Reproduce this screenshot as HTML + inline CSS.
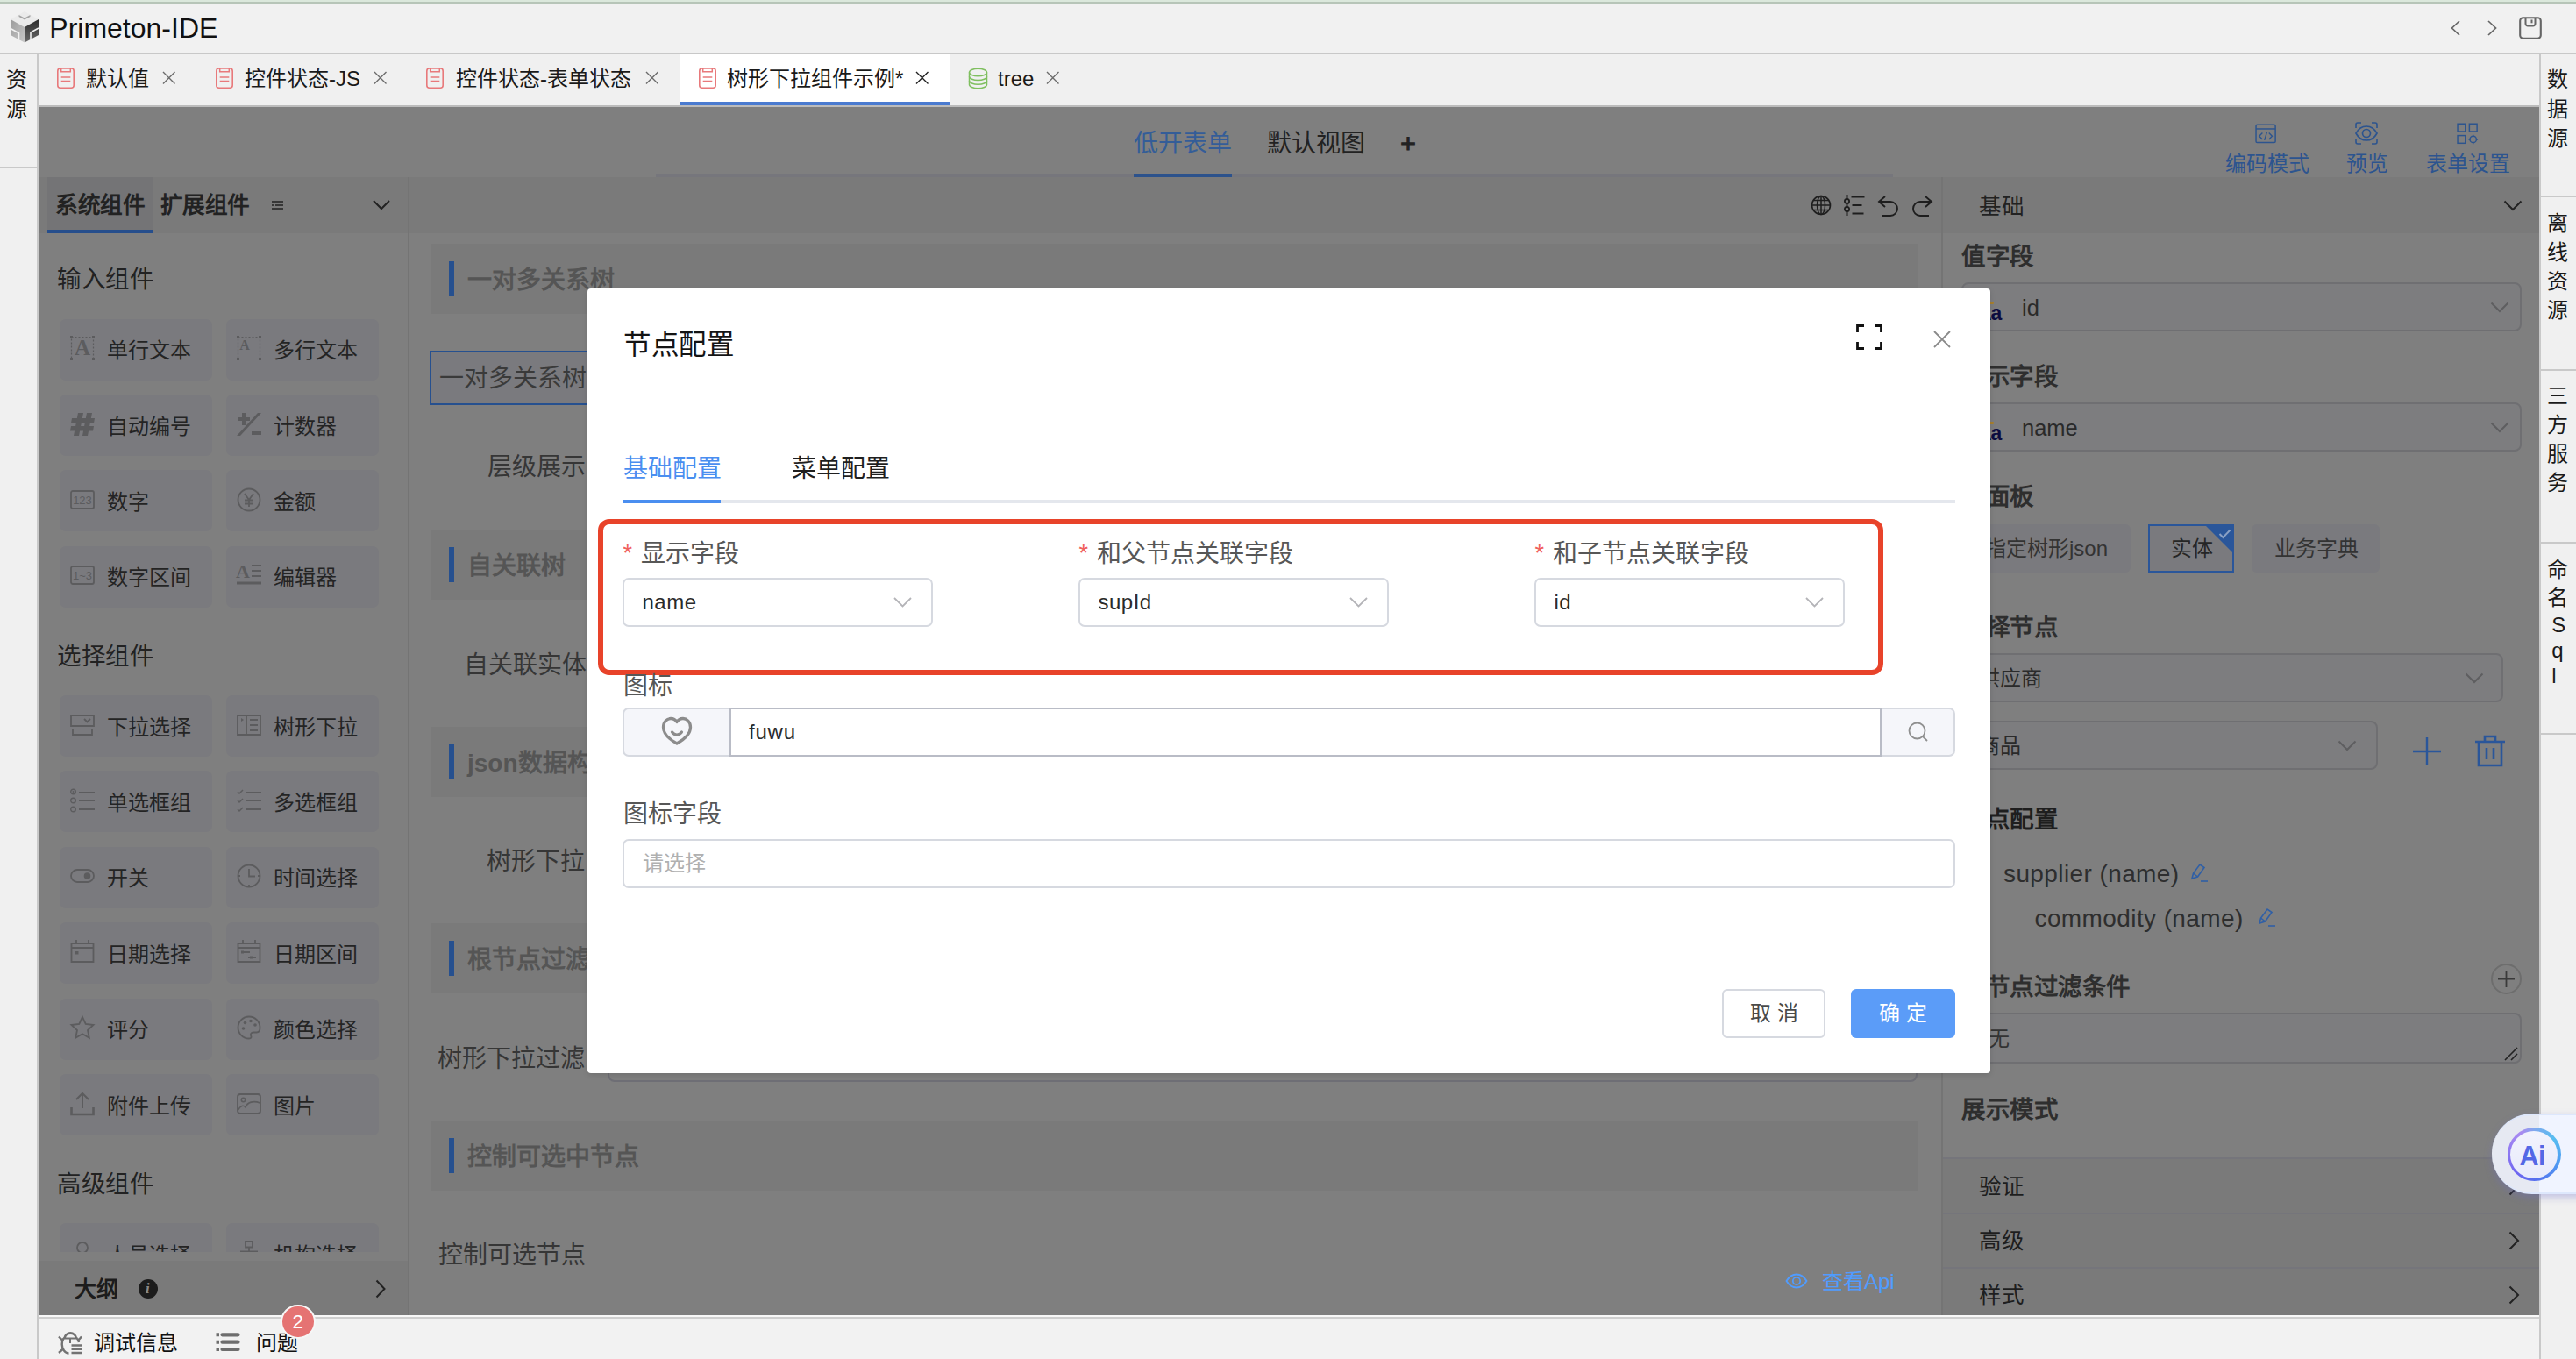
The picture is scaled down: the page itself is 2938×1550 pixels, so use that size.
<!DOCTYPE html>
<html lang="zh-CN"><head><meta charset="utf-8"><title>Primeton-IDE</title>
<style>
html,body{margin:0;padding:0}
body{width:2938px;height:1550px;position:relative;overflow:hidden;background:#f0f0f0;font-family:"Liberation Sans",sans-serif;color:#1f1f1f}
body div,body svg{position:absolute;box-sizing:border-box}
.t{white-space:nowrap}
svg{overflow:visible}
.t i{display:inline-block;width:1em;text-align:center;font-style:normal}

</style></head>
<body>
<div style="left:0px;top:0px;width:2938px;height:4px;background:linear-gradient(#dbe8dc 0,#dbe8dc 55%,#b7c5b8 56%,#b7c5b8 100%)"></div>
<div style="left:0px;top:4px;width:2938px;height:58px;background:#f1f1f1;border-bottom:2px solid #c8c8c8"></div>
<svg style="left:10px;top:12px;" width="36" height="38" viewBox="0 0 36 38"><defs><linearGradient id="lg1" x1="0" y1="0" x2="1" y2="1"><stop offset="0" stop-color="#9a9a9a"/><stop offset="1" stop-color="#c9c9c9"/></linearGradient><linearGradient id="lg2" x1="0" y1="0" x2="0" y2="1"><stop offset="0" stop-color="#2c2c2c"/><stop offset="1" stop-color="#6a6a6a"/></linearGradient></defs><path d="M18 1L34 10L18 19L2 10Z" fill="#ebebeb"/><path d="M2 10L18 19V36.500L2 28Z" fill="url(#lg1)"/><path d="M18 19L34 10V28L18 36.500Z" fill="url(#lg2)"/><path d="M11.500 5L18 8.500L24.500 5V7L18 10.500L11.500 7Z" fill="#a5a5a5"/><path d="M2 20.500L11.500 25.800V33" fill="none" stroke="#f1f1f1" stroke-width="1.600"/><path d="M34 20L25 25V32.500" fill="none" stroke="#f1f1f1" stroke-width="1.600"/></svg>
<div class="t" style="left:56.3px;top:9.5px;height:45px;line-height:45px;font-size:32px;color:#111;">Primeton-IDE</div>
<svg style="left:2795px;top:23px;" width="11" height="18" viewBox="0 0 11 18"><path d="M10 1L1.500 9L10 17" fill="none" stroke="#666" stroke-width="1.700"/></svg>
<svg style="left:2837px;top:23px;" width="11" height="18" viewBox="0 0 11 18"><path d="M1 1L9.500 9L1 17" fill="none" stroke="#666" stroke-width="1.700"/></svg>
<svg style="left:2873px;top:19px;" width="26" height="26" viewBox="0 0 26 26"><rect x="1.200" y="1.200" width="23.600" height="23.600" rx="3.500" fill="none" stroke="#666" stroke-width="2.100"/><path d="M7.500 1.500v6.500a2.500 2.500 0 0 0 2.500 2.500h6a2.500 2.500 0 0 0 2.500-2.500V1.500" fill="none" stroke="#666" stroke-width="2"/><path d="M14.500 3.500v3.800" stroke="#666" stroke-width="2"/></svg>
<div style="left:44px;top:62px;width:2852px;height:60px;background:#f0f0f0;border-bottom:2px solid #bcbcbc"></div>
<div style="left:775px;top:62px;width:308px;height:58px;background:#fff;border-bottom:4px solid #4a7bd0"></div>
<svg style="left:63.8px;top:76px;" width="22" height="26" viewBox="0 0 22 26"><rect x="1.800" y="1.900" width="18.400" height="22.300" rx="3" fill="none" stroke="#e8797b" stroke-width="1.600"/><path d="M5.700 2V5.800H16.300V2M5.700 11.900H16.300M5.700 16.400H16.300" fill="none" stroke="#e8797b" stroke-width="1.500"/></svg>
<div class="t" style="left:98px;top:72.5px;height:34px;line-height:34px;font-size:24px;color:#1a1a1a;"><i>默</i><i>认</i><i>值</i></div>
<svg style="left:184.5px;top:81.05px;" width="15.5" height="15.5" viewBox="0 0 15.5 15.5"><path d="M1 1L14.5 14.5M14.5 1L1 14.5" stroke="#6b6b6b" stroke-width="1.4" fill="none"/></svg>
<svg style="left:244.8px;top:76px;" width="22" height="26" viewBox="0 0 22 26"><rect x="1.800" y="1.900" width="18.400" height="22.300" rx="3" fill="none" stroke="#e8797b" stroke-width="1.600"/><path d="M5.700 2V5.800H16.300V2M5.700 11.900H16.300M5.700 16.400H16.300" fill="none" stroke="#e8797b" stroke-width="1.500"/></svg>
<div class="t" style="left:279px;top:72.5px;height:34px;line-height:34px;font-size:24px;color:#1a1a1a;"><i>控</i><i>件</i><i>状</i><i>态</i>-JS</div>
<svg style="left:425.5px;top:81.05px;" width="15.5" height="15.5" viewBox="0 0 15.5 15.5"><path d="M1 1L14.5 14.5M14.5 1L1 14.5" stroke="#6b6b6b" stroke-width="1.4" fill="none"/></svg>
<svg style="left:484.8px;top:76px;" width="22" height="26" viewBox="0 0 22 26"><rect x="1.800" y="1.900" width="18.400" height="22.300" rx="3" fill="none" stroke="#e8797b" stroke-width="1.600"/><path d="M5.700 2V5.800H16.300V2M5.700 11.900H16.300M5.700 16.400H16.300" fill="none" stroke="#e8797b" stroke-width="1.500"/></svg>
<div class="t" style="left:520px;top:72.5px;height:34px;line-height:34px;font-size:24px;color:#1a1a1a;"><i>控</i><i>件</i><i>状</i><i>态</i>-<i>表</i><i>单</i><i>状</i><i>态</i></div>
<svg style="left:735.5px;top:81.05px;" width="15.5" height="15.5" viewBox="0 0 15.5 15.5"><path d="M1 1L14.5 14.5M14.5 1L1 14.5" stroke="#6b6b6b" stroke-width="1.4" fill="none"/></svg>
<svg style="left:795.8px;top:76px;" width="22" height="26" viewBox="0 0 22 26"><rect x="1.800" y="1.900" width="18.400" height="22.300" rx="3" fill="none" stroke="#e8797b" stroke-width="1.600"/><path d="M5.700 2V5.800H16.300V2M5.700 11.900H16.300M5.700 16.400H16.300" fill="none" stroke="#e8797b" stroke-width="1.500"/></svg>
<div class="t" style="left:829px;top:72.5px;height:34px;line-height:34px;font-size:24px;color:#1a1a1a;"><i>树</i><i>形</i><i>下</i><i>拉</i><i>组</i><i>件</i><i>示</i><i>例</i>*</div>
<svg style="left:1043.5px;top:81.05px;" width="15.5" height="15.5" viewBox="0 0 15.5 15.5"><path d="M1 1L14.5 14.5M14.5 1L1 14.5" stroke="#222" stroke-width="1.4" fill="none"/></svg>
<svg style="left:1104px;top:77px;" width="23" height="25" viewBox="0 0 23 25"><ellipse cx="11.5" cy="5.5" rx="10" ry="4.3" fill="none" stroke="#7fbf5f" stroke-width="1.500"/><path d="M1.5 5.5v14c0 2.4 4.5 4.3 10 4.3s10-1.9 10-4.3v-14" fill="none" stroke="#7fbf5f" stroke-width="1.500"/><path d="M1.5 10.2c0 2.4 4.5 4.3 10 4.3s10-1.9 10-4.3M1.5 14.9c0 2.4 4.5 4.3 10 4.3s10-1.9 10-4.3" fill="none" stroke="#7fbf5f" stroke-width="1.500"/></svg>
<div class="t" style="left:1138px;top:72.5px;height:34px;line-height:34px;font-size:24px;color:#1a1a1a;">tree</div>
<svg style="left:1192.5px;top:81.05px;" width="15.5" height="15.5" viewBox="0 0 15.5 15.5"><path d="M1 1L14.5 14.5M14.5 1L1 14.5" stroke="#6b6b6b" stroke-width="1.4" fill="none"/></svg>
<div style="left:0px;top:62px;width:44px;height:1488px;background:#f0f0f0;border-right:2px solid #c9c9c9"></div>
<div class="t" style="left:7px;top:74.0px;height:34px;line-height:34px;font-size:24px;color:#1a1a1a;"><i>资</i></div>
<div class="t" style="left:7px;top:107.5px;height:34px;line-height:34px;font-size:24px;color:#1a1a1a;"><i>源</i></div>
<div style="left:0px;top:190px;width:42px;height:2px;background:#c9c9c9"></div>
<div style="left:2896px;top:62px;width:42px;height:1488px;background:#f0f0f0;border-left:2px solid #c9c9c9"></div>
<div class="t" style="left:2905.0px;top:74.3px;height:34px;line-height:34px;font-size:24px;color:#1a1a1a;"><i>数</i></div>
<div class="t" style="left:2905.0px;top:107.8px;height:34px;line-height:34px;font-size:24px;color:#1a1a1a;"><i>据</i></div>
<div class="t" style="left:2905.0px;top:140.8px;height:34px;line-height:34px;font-size:24px;color:#1a1a1a;"><i>源</i></div>
<div style="left:2898px;top:223px;width:40px;height:2px;background:#c9c9c9"></div>
<div class="t" style="left:2905.0px;top:238.3px;height:34px;line-height:34px;font-size:24px;color:#1a1a1a;"><i>离</i></div>
<div class="t" style="left:2905.0px;top:271.3px;height:34px;line-height:34px;font-size:24px;color:#1a1a1a;"><i>线</i></div>
<div class="t" style="left:2905.0px;top:304.3px;height:34px;line-height:34px;font-size:24px;color:#1a1a1a;"><i>资</i></div>
<div class="t" style="left:2905.0px;top:336.8px;height:34px;line-height:34px;font-size:24px;color:#1a1a1a;"><i>源</i></div>
<div style="left:2898px;top:421px;width:40px;height:2px;background:#c9c9c9"></div>
<div class="t" style="left:2905.0px;top:435.3px;height:34px;line-height:34px;font-size:24px;color:#1a1a1a;"><i>三</i></div>
<div class="t" style="left:2905.0px;top:468.3px;height:34px;line-height:34px;font-size:24px;color:#1a1a1a;"><i>方</i></div>
<div class="t" style="left:2905.0px;top:501.3px;height:34px;line-height:34px;font-size:24px;color:#1a1a1a;"><i>服</i></div>
<div class="t" style="left:2905.0px;top:534.3px;height:34px;line-height:34px;font-size:24px;color:#1a1a1a;"><i>务</i></div>
<div style="left:2898px;top:618px;width:40px;height:2px;background:#c9c9c9"></div>
<div class="t" style="left:2905.0px;top:632.8px;height:34px;line-height:34px;font-size:24px;color:#1a1a1a;"><i>命</i></div>
<div class="t" style="left:2905.0px;top:665.3px;height:34px;line-height:34px;font-size:24px;color:#1a1a1a;"><i>名</i></div>
<div class="t" style="left:2910.3px;top:696.3px;height:34px;line-height:34px;font-size:24px;color:#1a1a1a;">S</div>
<div class="t" style="left:2910.3px;top:725.3px;height:34px;line-height:34px;font-size:24px;color:#1a1a1a;">q</div>
<div class="t" style="left:2910.3px;top:754.3px;height:34px;line-height:34px;font-size:24px;color:#1a1a1a;">l</div>
<div style="left:2898px;top:836px;width:40px;height:2px;background:#c9c9c9"></div>
<div style="left:44px;top:1500px;width:2852px;height:50px;background:#f2f2f2;border-top:2px solid #f8f8f8"></div>
<div style="left:44px;top:1502px;width:2852px;height:2px;background:#cfcfcf"></div>
<svg style="left:66px;top:1518px;" width="28" height="27" viewBox="0 0 28 27"><path d="M7.500 8.500A6.800 6.800 0 0 1 21 8.500" fill="none" stroke="#737373" stroke-width="2.800"/><path d="M6 8.500H22.500M14 8.500V14" fill="none" stroke="#737373" stroke-width="2"/><path d="M6.500 8.500C4 12 4 18.500 7 22.500C8.500 24.500 10.500 25.500 12.500 25.500" fill="none" stroke="#737373" stroke-width="2.400"/><path d="M22 8.500C23.200 10 23.800 11.500 24 13" fill="none" stroke="#737373" stroke-width="2.400"/><path d="M1 6.500L5.500 11M1 25L6 20.500M27 6.500L23.500 10.500" fill="none" stroke="#737373" stroke-width="2.400"/><path d="M15.500 16.500H28M15.500 20.800H28M15.500 25H28" stroke="#737373" stroke-width="2.500"/></svg>
<div class="t" style="left:107.3px;top:1514.5px;height:34px;line-height:34px;font-size:24px;color:#111;"><i>调</i><i>试</i><i>信</i><i>息</i></div>
<svg style="left:246px;top:1520px;" width="28" height="22" viewBox="0 0 28 22"><path d="M7.500 2.300H25.500M7.500 10.700H25.500M7.500 19H25.500" stroke="#6e6e6e" stroke-width="4.200" stroke-linecap="round"/><path d="M0.500 2.300H4M0.500 10.700H4M0.500 19H4" stroke="#6e6e6e" stroke-width="4"/></svg>
<div class="t" style="left:291.8px;top:1514.5px;height:34px;line-height:34px;font-size:24px;color:#111;"><i>问</i><i>题</i></div>
<div style="left:320px;top:1487.5px;width:39.5px;height:39.5px;border-radius:20px;background:#e57373;border:2.500px solid #f6f6f6;z-index:5"></div>
<div class="t" style="left:333.6px;top:1491.8px;height:31px;line-height:31px;font-size:22.5px;color:#fff;z-index:6">2</div>
<div style="left:44px;top:122px;width:2852px;height:1378px;background:#7f7f7f"></div>
<div style="left:748px;top:198px;width:1411px;height:4px;background:#76767c"></div>
<div style="left:1293px;top:198px;width:112px;height:4px;background:#2c528c"></div>
<div class="t" style="left:1293px;top:144.0px;height:39px;line-height:39px;font-size:28px;color:#345d98;"><i>低</i><i>开</i><i>表</i><i>单</i></div>
<div class="t" style="left:1445px;top:144.0px;height:39px;line-height:39px;font-size:28px;color:#222222;"><i>默</i><i>认</i><i>视</i><i>图</i></div>
<div class="t" style="left:1597.2px;top:143.3px;height:42px;line-height:42px;font-size:30px;color:#222222;-webkit-text-stroke:1.100px #222">+</div>
<svg style="left:2570px;top:138px;" width="28" height="28" viewBox="0 0 28 28"><g transform="translate(1.2,1.6) scale(0.92)"><rect x="2" y="3" width="24" height="22" rx="1.5" fill="none" stroke="#2c548f" stroke-width="1.6"/><path d="M2 8h24" stroke="#2c548f" stroke-width="1.6"/><path d="M10 13l-4 4 4 4M18 13l4 4-4 4M15.5 12l-3 10" fill="none" stroke="#2c548f" stroke-width="1.5"/></g></svg>
<div class="t" style="left:2538px;top:169.8px;height:34px;line-height:34px;font-size:24px;color:#2c548f;font-weight:500;"><i>编</i><i>码</i><i>模</i><i>式</i></div>
<svg style="left:2685px;top:138px;" width="28" height="28" viewBox="0 0 28 28"><path d="M2 14c3-5.5 7-8 12-8s9 2.500 12 8c-3 5.500-7 8-12 8s-9-2.500-12-8z" fill="none" stroke="#2c548f" stroke-width="1.7"/><circle cx="14" cy="14" r="4.500" fill="none" stroke="#2c548f" stroke-width="1.7"/><path d="M2 8V4a2 2 0 0 1 2-2h4M20 2h4a2 2 0 0 1 2 2v4M26 20v4a2 2 0 0 1-2 2h-4M8 26H4a2 2 0 0 1-2-2v-4" fill="none" stroke="#2c548f" stroke-width="1.6"/></svg>
<div class="t" style="left:2676px;top:169.8px;height:34px;line-height:34px;font-size:24px;color:#2c548f;font-weight:500;"><i>预</i><i>览</i></div>
<svg style="left:2800px;top:138px;" width="28" height="28" viewBox="0 0 28 28"><g transform="translate(1.2,1.4) scale(0.92)"><rect x="2" y="2" width="9.500" height="9.500" fill="none" stroke="#2c548f" stroke-width="1.6"/><rect x="16.500" y="2" width="9.500" height="9.500" fill="none" stroke="#2c548f" stroke-width="1.6"/><rect x="2" y="16.500" width="9.500" height="9.500" fill="none" stroke="#2c548f" stroke-width="1.6"/><circle cx="21.2" cy="21.2" r="4" fill="none" stroke="#2c548f" stroke-width="1.6"/><path d="M21.2 15.500v2M21.2 25v2M15.500 21.2h2M25 21.2h2" stroke="#2c548f" stroke-width="1.6"/></g></svg>
<div class="t" style="left:2767px;top:169.8px;height:34px;line-height:34px;font-size:24px;color:#2c548f;font-weight:500;"><i>表</i><i>单</i><i>设</i><i>置</i></div>
<div style="left:44px;top:202px;width:2852px;height:64px;background:#7a7a7a"></div>
<div style="left:465px;top:202px;width:2px;height:1298px;background:#747474"></div>
<div style="left:54px;top:202px;width:120px;height:64px;background:#747476;border-bottom:4px solid #264e8c"></div>
<div class="t" style="left:63px;top:216.0px;height:36px;line-height:36px;font-size:25.6px;color:#222222;font-weight:bold;"><i>系</i><i>统</i><i>组</i><i>件</i></div>
<div class="t" style="left:182.5px;top:216.0px;height:36px;line-height:36px;font-size:25.6px;color:#222222;font-weight:bold;"><i>扩</i><i>展</i><i>组</i><i>件</i></div>
<svg style="left:310px;top:228px;" width="14" height="12" viewBox="0 0 14 12"><path d="M0 2h13M4 6h9M0 10h13" stroke="#222" stroke-width="1.6"/><path d="M0 6h2" stroke="#222" stroke-width="1.6"/></svg>
<svg style="left:425px;top:228px;" width="20" height="12" viewBox="0 0 20 12"><path d="M1 1l9 9 9-9" fill="none" stroke="#222" stroke-width="2"/></svg>
<div class="t" style="left:65px;top:300.0px;height:38px;line-height:38px;font-size:27.5px;color:#222222;"><i>输</i><i>入</i><i>组</i><i>件</i></div>
<div class="t" style="left:65px;top:729.5px;height:38px;line-height:38px;font-size:27.5px;color:#222222;"><i>选</i><i>择</i><i>组</i><i>件</i></div>
<div class="t" style="left:65px;top:1332.0px;height:38px;line-height:38px;font-size:27.5px;color:#222222;"><i>高</i><i>级</i><i>组</i><i>件</i></div>
<div style="left:68px;top:363.75px;width:174px;height:70px;background:#7a7a7e;border-radius:7px"></div>
<svg style="left:80px;top:383.45px;" width="28" height="28" viewBox="0 0 28 28"><rect x="1.500" y="1.500" width="25" height="25" fill="none" stroke="#5c5c5e" stroke-width="1.2" stroke-dasharray="2 2"/><rect x="0" y="0" width="3" height="3" fill="#5c5c5e"/><rect x="25" y="0" width="3" height="3" fill="#5c5c5e"/><rect x="0" y="25" width="3" height="3" fill="#5c5c5e"/><rect x="25" y="25" width="3" height="3" fill="#5c5c5e"/><text x="14" y="22" font-family="Liberation Serif" font-size="25" font-weight="bold" text-anchor="middle" fill="#5c5c5e">A</text></svg>
<div class="t" style="left:121.8px;top:383.4px;height:34px;line-height:34px;font-size:24px;color:#242424;"><i>单</i><i>行</i><i>文</i><i>本</i></div>
<div style="left:258px;top:363.75px;width:174px;height:70px;background:#7a7a7e;border-radius:7px"></div>
<svg style="left:270px;top:383.45px;" width="28" height="28" viewBox="0 0 28 28"><rect x="1.500" y="1.500" width="25" height="25" fill="none" stroke="#5c5c5e" stroke-width="1.2" stroke-dasharray="2 2"/><rect x="0" y="0" width="3" height="3" fill="#5c5c5e"/><rect x="25" y="0" width="3" height="3" fill="#5c5c5e"/><rect x="0" y="25" width="3" height="3" fill="#5c5c5e"/><rect x="25" y="25" width="3" height="3" fill="#5c5c5e"/><text x="9" y="16" font-family="Liberation Serif" font-size="16" font-weight="bold" text-anchor="middle" fill="#5c5c5e">A</text></svg>
<div class="t" style="left:311.8px;top:383.4px;height:34px;line-height:34px;font-size:24px;color:#242424;"><i>多</i><i>行</i><i>文</i><i>本</i></div>
<div style="left:68px;top:450px;width:174px;height:70px;background:#7a7a7e;border-radius:7px"></div>
<svg style="left:80px;top:469.7px;" width="28" height="28" viewBox="0 0 28 28"><path d="M9 1h6l-5 26H4zM19 1h6l-5 26h-6z" fill="#5c5c5e"/><path d="M2 7h26l-1 5.500H1zM1 16h26l-1 5.500H0z" fill="#5c5c5e"/></svg>
<div class="t" style="left:121.8px;top:469.7px;height:34px;line-height:34px;font-size:24px;color:#242424;"><i>自</i><i>动</i><i>编</i><i>号</i></div>
<div style="left:258px;top:450px;width:174px;height:70px;background:#7a7a7e;border-radius:7px"></div>
<svg style="left:270px;top:469.7px;" width="28" height="28" viewBox="0 0 28 28"><path d="M0 27L24 1h4L4 27z" fill="#5c5c5e"/><path d="M6 1h4v5h5v4h-5v5H6v-5H1V6h5z" fill="#5c5c5e"/><rect x="17" y="22" width="11" height="4" fill="#5c5c5e"/></svg>
<div class="t" style="left:311.8px;top:469.7px;height:34px;line-height:34px;font-size:24px;color:#242424;"><i>计</i><i>数</i><i>器</i></div>
<div style="left:68px;top:536px;width:174px;height:70px;background:#7a7a7e;border-radius:7px"></div>
<svg style="left:80px;top:555.7px;" width="28" height="28" viewBox="0 0 28 28"><rect x="1" y="4" width="26" height="20" rx="2" fill="none" stroke="#5c5c5e" stroke-width="1.8"/><text x="14" y="19" font-family="Liberation Sans" font-size="13" text-anchor="middle" fill="#5c5c5e">123</text></svg>
<div class="t" style="left:121.8px;top:555.7px;height:34px;line-height:34px;font-size:24px;color:#242424;"><i>数</i><i>字</i></div>
<div style="left:258px;top:536px;width:174px;height:70px;background:#7a7a7e;border-radius:7px"></div>
<svg style="left:270px;top:555.7px;" width="28" height="28" viewBox="0 0 28 28"><circle cx="14" cy="14" r="12.500" fill="none" stroke="#5c5c5e" stroke-width="1.8"/><path d="M9 7l5 7 5-7M14 14v8M9 14.500h10M9 18.500h10" fill="none" stroke="#5c5c5e" stroke-width="1.8"/></svg>
<div class="t" style="left:311.8px;top:555.7px;height:34px;line-height:34px;font-size:24px;color:#242424;"><i>金</i><i>额</i></div>
<div style="left:68px;top:622.5px;width:174px;height:70px;background:#7a7a7e;border-radius:7px"></div>
<svg style="left:80px;top:642.2px;" width="28" height="28" viewBox="0 0 28 28"><rect x="1" y="4" width="26" height="20" rx="2" fill="none" stroke="#5c5c5e" stroke-width="1.8"/><text x="14" y="19" font-family="Liberation Sans" font-size="13" text-anchor="middle" fill="#5c5c5e">1~3</text></svg>
<div class="t" style="left:121.8px;top:642.2px;height:34px;line-height:34px;font-size:24px;color:#242424;"><i>数</i><i>字</i><i>区</i><i>间</i></div>
<div style="left:258px;top:622.5px;width:174px;height:70px;background:#7a7a7e;border-radius:7px"></div>
<svg style="left:270px;top:642.2px;" width="28" height="28" viewBox="0 0 28 28"><text x="7" y="17" font-family="Liberation Serif" font-weight="bold" font-size="22" text-anchor="middle" fill="#5c5c5e">A</text><path d="M17 3h11M17 9h11M17 15h11" stroke="#5c5c5e" stroke-width="2.2"/><path d="M0 23h28" stroke="#5c5c5e" stroke-width="3"/></svg>
<div class="t" style="left:311.8px;top:642.2px;height:34px;line-height:34px;font-size:24px;color:#242424;"><i>编</i><i>辑</i><i>器</i></div>
<div style="left:68px;top:793px;width:174px;height:70px;background:#7a7a7e;border-radius:7px"></div>
<svg style="left:80px;top:812.7px;" width="28" height="28" viewBox="0 0 28 28"><path d="M1 3h26v12H1zM3 18v7h22v-7M16 7l3.500 3.500L23 7" fill="none" stroke="#5c5c5e" stroke-width="1.8"/></svg>
<div class="t" style="left:121.8px;top:812.7px;height:34px;line-height:34px;font-size:24px;color:#242424;"><i>下</i><i>拉</i><i>选</i><i>择</i></div>
<div style="left:258px;top:793px;width:174px;height:70px;background:#7a7a7e;border-radius:7px"></div>
<svg style="left:270px;top:812.7px;" width="28" height="28" viewBox="0 0 28 28"><path d="M1 3h26v22H1zM11 3v22M15 8h9M15 14h9M15 20h9" fill="none" stroke="#5c5c5e" stroke-width="1.8"/><path d="M5 6l3 2-3 2z" fill="#5c5c5e"/></svg>
<div class="t" style="left:311.8px;top:812.7px;height:34px;line-height:34px;font-size:24px;color:#242424;"><i>树</i><i>形</i><i>下</i><i>拉</i></div>
<div style="left:68px;top:879.25px;width:174px;height:70px;background:#7a7a7e;border-radius:7px"></div>
<svg style="left:80px;top:898.95px;" width="28" height="28" viewBox="0 0 28 28"><circle cx="3.500" cy="4" r="2.800" fill="none" stroke="#5c5c5e" stroke-width="1.4"/><circle cx="3.500" cy="4" r="1" fill="#5c5c5e"/><circle cx="3.500" cy="14" r="2.800" fill="none" stroke="#5c5c5e" stroke-width="1.4"/><circle cx="3.500" cy="24" r="2.800" fill="none" stroke="#5c5c5e" stroke-width="1.4"/><path d="M10 5h18M10 14h18M10 24h18" stroke="#5c5c5e" stroke-width="2.2"/></svg>
<div class="t" style="left:121.8px;top:899.0px;height:34px;line-height:34px;font-size:24px;color:#242424;"><i>单</i><i>选</i><i>框</i><i>组</i></div>
<div style="left:258px;top:879.25px;width:174px;height:70px;background:#7a7a7e;border-radius:7px"></div>
<svg style="left:270px;top:898.95px;" width="28" height="28" viewBox="0 0 28 28"><path d="M1 4l2 2 4-4M1 14l2 2 4-4M1 24l2 2 4-4" fill="none" stroke="#5c5c5e" stroke-width="1.5"/><path d="M10 5h18M10 14h18M10 24h18" stroke="#5c5c5e" stroke-width="2.2"/></svg>
<div class="t" style="left:311.8px;top:899.0px;height:34px;line-height:34px;font-size:24px;color:#242424;"><i>多</i><i>选</i><i>框</i><i>组</i></div>
<div style="left:68px;top:965.5px;width:174px;height:70px;background:#7a7a7e;border-radius:7px"></div>
<svg style="left:80px;top:985.2px;" width="28" height="28" viewBox="0 0 28 28"><rect x="1" y="7" width="26" height="14" rx="7" fill="none" stroke="#5c5c5e" stroke-width="1.8"/><circle cx="19.500" cy="14" r="3.800" fill="#5c5c5e"/></svg>
<div class="t" style="left:121.8px;top:985.2px;height:34px;line-height:34px;font-size:24px;color:#242424;"><i>开</i><i>关</i></div>
<div style="left:258px;top:965.5px;width:174px;height:70px;background:#7a7a7e;border-radius:7px"></div>
<svg style="left:270px;top:985.2px;" width="28" height="28" viewBox="0 0 28 28"><circle cx="14" cy="14" r="12.500" fill="none" stroke="#5c5c5e" stroke-width="1.8"/><path d="M14 6v8.500h7M14 24v2.500M1.500 14H4M24 14h2.500" fill="none" stroke="#5c5c5e" stroke-width="1.8"/></svg>
<div class="t" style="left:311.8px;top:985.2px;height:34px;line-height:34px;font-size:24px;color:#242424;"><i>时</i><i>间</i><i>选</i><i>择</i></div>
<div style="left:68px;top:1051.75px;width:174px;height:70px;background:#7a7a7e;border-radius:7px"></div>
<svg style="left:80px;top:1071.45px;" width="28" height="28" viewBox="0 0 28 28"><path d="M1.500 5h25v21h-25zM1.500 10h25M7 1v5M21 1v5" fill="none" stroke="#5c5c5e" stroke-width="1.8"/><rect x="6" y="14" width="3.500" height="3.500" fill="#5c5c5e"/></svg>
<div class="t" style="left:121.8px;top:1071.5px;height:34px;line-height:34px;font-size:24px;color:#242424;"><i>日</i><i>期</i><i>选</i><i>择</i></div>
<div style="left:258px;top:1051.75px;width:174px;height:70px;background:#7a7a7e;border-radius:7px"></div>
<svg style="left:270px;top:1071.45px;" width="28" height="28" viewBox="0 0 28 28"><path d="M1.500 5h25v21h-25zM1.500 10h25M7 1v5M21 1v5M6 15h9M13 21h9" fill="none" stroke="#5c5c5e" stroke-width="1.8"/><rect x="5" y="13.500" width="3" height="3" fill="#5c5c5e"/><rect x="15" y="19.500" width="3" height="3" fill="#5c5c5e"/></svg>
<div class="t" style="left:311.8px;top:1071.5px;height:34px;line-height:34px;font-size:24px;color:#242424;"><i>日</i><i>期</i><i>区</i><i>间</i></div>
<div style="left:68px;top:1138.5px;width:174px;height:70px;background:#7a7a7e;border-radius:7px"></div>
<svg style="left:80px;top:1158.2px;" width="28" height="28" viewBox="0 0 28 28"><path d="M14 2l3.700 8 8.800 1-6.500 6 1.800 8.700L14 21.300 6.200 25.700 8 17 1.500 11l8.800-1z" fill="none" stroke="#5c5c5e" stroke-width="1.8"/></svg>
<div class="t" style="left:121.8px;top:1158.2px;height:34px;line-height:34px;font-size:24px;color:#242424;"><i>评</i><i>分</i></div>
<div style="left:258px;top:1138.5px;width:174px;height:70px;background:#7a7a7e;border-radius:7px"></div>
<svg style="left:270px;top:1158.2px;" width="28" height="28" viewBox="0 0 28 28"><path d="M14 1.500a12.500 12.500 0 1 0 0 25c2.500 0 3-1.500 2.200-3-1-2 .3-4 2.800-4h3.500c2.500 0 4-2 4-5C26.500 7 21 1.500 14 1.500z" fill="none" stroke="#5c5c5e" stroke-width="1.8"/><circle cx="7.500" cy="15" r="1.800" fill="#5c5c5e"/><circle cx="9.500" cy="8.500" r="1.800" fill="#5c5c5e"/><circle cx="16" cy="6.500" r="1.800" fill="#5c5c5e"/><circle cx="21" cy="11" r="1.800" fill="#5c5c5e"/></svg>
<div class="t" style="left:311.8px;top:1158.2px;height:34px;line-height:34px;font-size:24px;color:#242424;"><i>颜</i><i>色</i><i>选</i><i>择</i></div>
<div style="left:68px;top:1225px;width:174px;height:70px;background:#7a7a7e;border-radius:7px"></div>
<svg style="left:80px;top:1244.7px;" width="28" height="28" viewBox="0 0 28 28"><path d="M14 19V2M7 9l7-7 7 7" fill="none" stroke="#5c5c5e" stroke-width="2"/><path d="M1.500 18v8h25v-8" fill="none" stroke="#5c5c5e" stroke-width="2.6"/></svg>
<div class="t" style="left:121.8px;top:1244.7px;height:34px;line-height:34px;font-size:24px;color:#242424;"><i>附</i><i>件</i><i>上</i><i>传</i></div>
<div style="left:258px;top:1225px;width:174px;height:70px;background:#7a7a7e;border-radius:7px"></div>
<svg style="left:270px;top:1244.7px;" width="28" height="28" viewBox="0 0 28 28"><rect x="1" y="3" width="26" height="22" rx="3" fill="none" stroke="#5c5c5e" stroke-width="1.8"/><circle cx="7.500" cy="9.500" r="2.200" fill="none" stroke="#5c5c5e" stroke-width="1.500"/><path d="M1.500 21c3-5 6-6 8.500-3 2-6 9-8 16.500-5" fill="none" stroke="#5c5c5e" stroke-width="1.6"/></svg>
<div class="t" style="left:311.8px;top:1244.7px;height:34px;line-height:34px;font-size:24px;color:#242424;"><i>图</i><i>片</i></div>
<div style="left:44px;top:1395px;width:421px;height:32.500px;overflow:hidden">
<div style="left:24px;top:0px;width:174px;height:70px;background:#7a7a7e;border-radius:7px"></div>
<svg style="left:36px;top:21px;" width="28" height="28" viewBox="0 0 28 28"><circle cx="14" cy="7" r="6" fill="none" stroke="#5c5c5e" stroke-width="1.8"/></svg>
<div class="t" style="left:77.8px;top:19.7px;height:34px;line-height:34px;font-size:24px;color:#242424;"><i>人</i><i>员</i><i>选</i><i>择</i></div>
<div style="left:214px;top:0px;width:174px;height:70px;background:#7a7a7e;border-radius:7px"></div>
<svg style="left:226px;top:21px;" width="28" height="28" viewBox="0 0 28 28"><path d="M10 0h8v6.500h-8zM14 6.500v4.500M4 11.500h20" fill="none" stroke="#5c5c5e" stroke-width="1.8"/></svg>
<div class="t" style="left:267.8px;top:19.7px;height:34px;line-height:34px;font-size:24px;color:#242424;"><i>机</i><i>构</i><i>选</i><i>择</i></div>
</div>
<div style="left:44px;top:1438px;width:421px;height:62px;background:#7a7a7a"></div>
<div class="t" style="left:85px;top:1452.5px;height:35px;line-height:35px;font-size:25px;color:#1c1c1c;font-weight:bold;"><i>大</i><i>纲</i></div>
<div style="left:158px;top:1459px;width:22px;height:22px;border-radius:11px;background:#1c1c1c"></div>
<div class="t" style="left:166px;top:1458.0px;height:24px;line-height:24px;font-size:17px;color:#8a8a8a;font-weight:bold;font-style:italic;font-family:'Liberation Serif',serif">i</div>
<svg style="left:428px;top:1459px;" width="12" height="22" viewBox="0 0 12 22"><path d="M1.500 1.500l9 9.500-9 9.500" fill="none" stroke="#222" stroke-width="2"/></svg>
<svg style="left:2065px;top:222px;" width="24" height="24" viewBox="0 0 24 24"><circle cx="12" cy="12" r="10.500" fill="none" stroke="#1e1e1e" stroke-width="1.6"/><ellipse cx="12" cy="12" rx="4.500" ry="10.500" fill="none" stroke="#1e1e1e" stroke-width="1.500"/><path d="M1.500 12h21M3 6.500h18M3 17.500h18M12 1.500v21" stroke="#1e1e1e" stroke-width="1.500"/></svg>
<svg style="left:2103px;top:222px;" width="24" height="24" viewBox="0 0 24 24"><path d="M8.500 2.500h15M9.500 12h11M9.500 21.500h13" stroke="#1e1e1e" stroke-width="2"/><path d="M3.500 0v24" stroke="#1e1e1e" stroke-width="2"/><circle cx="3.500" cy="7.500" r="2.600" fill="#7a7a7a" stroke="#1e1e1e" stroke-width="1.800"/><circle cx="3.500" cy="16.500" r="2.600" fill="#7a7a7a" stroke="#1e1e1e" stroke-width="1.800"/></svg>
<svg style="left:2141px;top:222px;" width="26" height="26" viewBox="0 0 26 26"><path d="M9 2L2 8l7 6M2 8h13a8 8 0 0 1 0 16H5" fill="none" stroke="#1e1e1e" stroke-width="1.900"/></svg>
<svg style="left:2179px;top:222px;" width="26" height="26" viewBox="0 0 26 26"><path d="M17 2l7 6-7 6M24 8H11a8 8 0 0 0 0 16h10" fill="none" stroke="#1e1e1e" stroke-width="1.900"/></svg>
<div style="left:492px;top:278px;width:1696px;height:80px;background:#7a7a7a"></div>
<div style="left:512px;top:298px;width:6px;height:40px;background:#26508f"></div>
<div class="t" style="left:533px;top:300.0px;height:39px;line-height:39px;font-size:28px;color:#555555;font-weight:bold;"><i>一</i><i>对</i><i>多</i><i>关</i><i>系</i><i>树</i></div>
<div style="left:492px;top:603.5px;width:1696px;height:80px;background:#7a7a7a"></div>
<div style="left:512px;top:623.5px;width:6px;height:40px;background:#26508f"></div>
<div class="t" style="left:533px;top:625.5px;height:39px;line-height:39px;font-size:28px;color:#555555;font-weight:bold;"><i>自</i><i>关</i><i>联</i><i>树</i></div>
<div style="left:492px;top:829px;width:1696px;height:80px;background:#7a7a7a"></div>
<div style="left:512px;top:849px;width:6px;height:40px;background:#26508f"></div>
<div class="t" style="left:533px;top:851.0px;height:39px;line-height:39px;font-size:28px;color:#555555;font-weight:bold;">json<i>数</i><i>据</i><i>构</i><i>建</i><i>树</i></div>
<div style="left:492px;top:1052.5px;width:1696px;height:80px;background:#7a7a7a"></div>
<div style="left:512px;top:1072.5px;width:6px;height:40px;background:#26508f"></div>
<div class="t" style="left:533px;top:1074.5px;height:39px;line-height:39px;font-size:28px;color:#555555;font-weight:bold;"><i>根</i><i>节</i><i>点</i><i>过</i><i>滤</i><i>条</i><i>件</i></div>
<div style="left:492px;top:1278px;width:1696px;height:80px;background:#7a7a7a"></div>
<div style="left:512px;top:1298px;width:6px;height:40px;background:#26508f"></div>
<div class="t" style="left:533px;top:1300.0px;height:39px;line-height:39px;font-size:28px;color:#555555;font-weight:bold;"><i>控</i><i>制</i><i>可</i><i>选</i><i>中</i><i>节</i><i>点</i></div>
<div style="left:490px;top:400px;width:1700px;height:61.5px;border:2px solid #26508f;background:#7a7a7e"></div>
<div class="t" style="left:501px;top:412.0px;height:39px;line-height:39px;font-size:28px;color:#3a3a3a;"><i>一</i><i>对</i><i>多</i><i>关</i><i>系</i><i>树</i></div>
<div class="t" style="left:556px;top:513.0px;height:39px;line-height:39px;font-size:28px;color:#363636;"><i>层</i><i>级</i><i>展</i><i>示</i></div>
<div class="t" style="left:528.5px;top:738.5px;height:39px;line-height:39px;font-size:28px;color:#363636;"><i>自</i><i>关</i><i>联</i><i>实</i><i>体</i></div>
<div class="t" style="left:554.5px;top:963.0px;height:39px;line-height:39px;font-size:28px;color:#363636;"><i>树</i><i>形</i><i>下</i><i>拉</i></div>
<div class="t" style="left:498.5px;top:1187.5px;height:39px;line-height:39px;font-size:28px;color:#363636;"><i>树</i><i>形</i><i>下</i><i>拉</i><i>过</i><i>滤</i></div>
<div class="t" style="left:500px;top:1412.0px;height:39px;line-height:39px;font-size:28px;color:#363636;"><i>控</i><i>制</i><i>可</i><i>选</i><i>节</i><i>点</i></div>
<div style="left:693px;top:1182px;width:1494px;height:52px;border:2px solid #6e6e75;border-radius:8px"></div>
<svg style="left:2036px;top:1451px;" width="26" height="20" viewBox="0 0 26 20"><path d="M1.500 10c3-5 6.500-7.500 11.500-7.500S21.500 5 24.500 10c-3 5-6.500 7.500-11.500 7.500S4.500 15 1.500 10z" fill="none" stroke="#509cff" stroke-width="1.800"/><circle cx="13" cy="10" r="4.200" fill="none" stroke="#509cff" stroke-width="1.800"/></svg>
<div class="t" style="left:2078px;top:1445.0px;height:34px;line-height:34px;font-size:24px;color:#509cff;"><i>查</i><i>看</i>Api</div>
<div style="left:2214px;top:202px;width:2px;height:1298px;background:#747474"></div>
<div class="t" style="left:2257px;top:217.0px;height:36px;line-height:36px;font-size:25.5px;color:#222222;"><i>基</i><i>础</i></div>
<svg style="left:2855px;top:228px;" width="22" height="13" viewBox="0 0 22 13"><path d="M1.500 1.500l9.500 9.500 9.500-9.500" fill="none" stroke="#222" stroke-width="2"/></svg>
<div class="t" style="left:2237px;top:274.0px;height:38px;line-height:38px;font-size:27.5px;color:#2e2e2e;font-weight:bold;"><i>值</i><i>字</i><i>段</i></div>
<div style="left:2237px;top:322px;width:639px;height:56px;border:2px solid #6f6f72;border-radius:8px;background:#7d7d7f"></div>
<div class="t" style="left:2255px;top:340.5px;height:32px;line-height:32px;font-size:23px;color:#0c0c40;font-weight:bold;letter-spacing:-1px">Aa</div>
<div style="left:2269px;top:344px;width:5px;height:3px;background:#a8802f;border-radius:1px"></div>
<div class="t" style="left:2306px;top:332.5px;height:36px;line-height:36px;font-size:25.5px;color:#2a2a2a;">id</div>
<svg style="left:2840px;top:344px;" width="22" height="13" viewBox="0 0 22 13"><path d="M1.500 1.500l9.500 9.500 9.500-9.500" fill="none" stroke="#5e5e60" stroke-width="2"/></svg>
<div class="t" style="left:2237px;top:411.0px;height:38px;line-height:38px;font-size:27.5px;color:#2e2e2e;font-weight:bold;"><i>显</i><i>示</i><i>字</i><i>段</i></div>
<div style="left:2237px;top:459px;width:639px;height:56px;border:2px solid #6f6f72;border-radius:8px;background:#7d7d7f"></div>
<div class="t" style="left:2255px;top:477.5px;height:32px;line-height:32px;font-size:23px;color:#0c0c40;font-weight:bold;letter-spacing:-1px">Aa</div>
<div style="left:2269px;top:481px;width:5px;height:3px;background:#a8802f;border-radius:1px"></div>
<div class="t" style="left:2306px;top:469.5px;height:36px;line-height:36px;font-size:25.5px;color:#2a2a2a;">name</div>
<svg style="left:2840px;top:481px;" width="22" height="13" viewBox="0 0 22 13"><path d="M1.500 1.500l9.500 9.500 9.500-9.500" fill="none" stroke="#5e5e60" stroke-width="2"/></svg>
<div class="t" style="left:2237px;top:548.0px;height:38px;line-height:38px;font-size:27.5px;color:#2e2e2e;font-weight:bold;"><i>树</i><i>面</i><i>板</i></div>
<div style="left:2237px;top:598px;width:193px;height:55px;background:#7a7a7e;border-radius:6px"></div>
<div class="t" style="left:2264px;top:609.0px;height:34px;line-height:34px;font-size:24px;color:#333;"><i>指</i><i>定</i><i>树</i><i>形</i>json</div>
<div style="left:2450px;top:598px;width:98px;height:55px;border:2px solid #2a569a;background:#7a7a7e;overflow:hidden"><div style="right:-2px;top:-2px;width:0;height:0;border-top:34px solid #2a569a;border-left:34px solid transparent"></div><svg style="right:1px;top:3px" width="15" height="12" viewBox="0 0 15 12"><path d="M1.500 6l4 4 8-8.500" fill="none" stroke="#8aa0c4" stroke-width="2"/></svg></div>
<div class="t" style="left:2476px;top:609.0px;height:34px;line-height:34px;font-size:24px;color:#262626;"><i>实</i><i>体</i></div>
<div style="left:2568px;top:598px;width:146px;height:55px;background:#7a7a7e;border-radius:6px"></div>
<div class="t" style="left:2594px;top:609.0px;height:34px;line-height:34px;font-size:24px;color:#333;"><i>业</i><i>务</i><i>字</i><i>典</i></div>
<div class="t" style="left:2237px;top:697.0px;height:38px;line-height:38px;font-size:27.5px;color:#2e2e2e;font-weight:bold;"><i>选</i><i>择</i><i>节</i><i>点</i></div>
<div style="left:2237px;top:745px;width:618px;height:56px;border:2px solid #6f6f72;border-radius:8px;background:#7d7d7f"></div>
<div class="t" style="left:2257px;top:756.5px;height:34px;line-height:34px;font-size:24px;color:#2a2a2a;"><i>供</i><i>应</i><i>商</i></div>
<svg style="left:2811px;top:767px;" width="22" height="13" viewBox="0 0 22 13"><path d="M1.500 1.500l9.500 9.500 9.500-9.500" fill="none" stroke="#5e5e60" stroke-width="2"/></svg>
<div style="left:2237px;top:822px;width:475px;height:56px;border:2px solid #6f6f72;border-radius:8px;background:#7d7d7f"></div>
<div class="t" style="left:2257px;top:833.5px;height:34px;line-height:34px;font-size:24px;color:#2a2a2a;"><i>商</i><i>品</i></div>
<svg style="left:2666px;top:844px;" width="22" height="13" viewBox="0 0 22 13"><path d="M1.500 1.500l9.500 9.500 9.500-9.500" fill="none" stroke="#5e5e60" stroke-width="2"/></svg>
<svg style="left:2752px;top:841px;" width="32" height="32" viewBox="0 0 32 32"><path d="M16 0v32M0 16h32" stroke="#2a569a" stroke-width="2.400"/></svg>
<svg style="left:2823px;top:838px;" width="34" height="38" viewBox="0 0 34 38"><path d="M0 8h34M11 8V2h12v6M4 8v27h26V8" fill="none" stroke="#2a569a" stroke-width="2.600"/><path d="M13 15v13M21 15v13" stroke="#2a569a" stroke-width="2.600"/></svg>
<div class="t" style="left:2237px;top:916.0px;height:38px;line-height:38px;font-size:27.5px;color:#1e1e1e;font-weight:bold;"><i>节</i><i>点</i><i>配</i><i>置</i></div>
<div class="t" style="left:2285px;top:976.5px;height:39px;line-height:39px;font-size:28px;color:#2e2e2e;letter-spacing:0.400px">supplier (name)</div>
<div class="t" style="left:2320.5px;top:1027.5px;height:39px;line-height:39px;font-size:28px;color:#2e2e2e;letter-spacing:0.400px">commodity (name)</div>
<svg style="left:2498px;top:985px;" width="21" height="22" viewBox="0 0 21 22"><path d="M2 17l1.500-6L11 1l5 3.500L8.500 15z M3.500 11l5 4" fill="none" stroke="#2f5fa6" stroke-width="1.600"/><path d="M12 20h8" stroke="#2f5fa6" stroke-width="1.600"/></svg>
<svg style="left:2575px;top:1036px;" width="21" height="22" viewBox="0 0 21 22"><path d="M2 17l1.500-6L11 1l5 3.500L8.500 15z M3.500 11l5 4" fill="none" stroke="#2f5fa6" stroke-width="1.600"/><path d="M12 20h8" stroke="#2f5fa6" stroke-width="1.600"/></svg>
<div class="t" style="left:2237px;top:1107.0px;height:38px;line-height:38px;font-size:27.5px;color:#2e2e2e;font-weight:bold;"><i>根</i><i>节</i><i>点</i><i>过</i><i>滤</i><i>条</i><i>件</i></div>
<div style="left:2841px;top:1099px;width:35px;height:35px;border:2px solid #6d6d6d;border-radius:18px"></div>
<svg style="left:2849px;top:1107px;" width="19" height="19" viewBox="0 0 19 19"><path d="M9.500 0v19M0 9.500h19" stroke="#3a3a3a" stroke-width="1.800"/></svg>
<div style="left:2237px;top:1155px;width:639px;height:58px;border:2px solid #6f6f72;border-radius:8px;background:#7d7d7f"></div>
<div class="t" style="left:2268px;top:1168.0px;height:34px;line-height:34px;font-size:24px;color:#333;"><i>无</i></div>
<svg style="left:2856px;top:1194px;" width="16" height="16" viewBox="0 0 16 16"><path d="M1 15L15 1M8 15l7-7" stroke="#222" stroke-width="1.600"/></svg>
<div class="t" style="left:2237px;top:1247.0px;height:38px;line-height:38px;font-size:27.5px;color:#2e2e2e;font-weight:bold;"><i>展</i><i>示</i><i>模</i><i>式</i></div>
<div style="left:2216px;top:1320px;width:2680px;height:180px;background:#7a7a7a;width:680px"></div>
<div style="left:2216px;top:1320px;width:680px;height:2px;background:#75757b"></div>
<div style="left:2216px;top:1383px;width:680px;height:2px;background:#75757b"></div>
<div style="left:2216px;top:1445px;width:680px;height:2px;background:#75757b"></div>
<div class="t" style="left:2257px;top:1335.0px;height:36px;line-height:36px;font-size:25.5px;color:#1e1e1e;"><i>验</i><i>证</i></div>
<svg style="left:2861px;top:1342px;" width="13" height="22" viewBox="0 0 13 22"><path d="M1.500 1.500l9.500 9.500-9.500 9.500" fill="none" stroke="#222" stroke-width="2"/></svg>
<div class="t" style="left:2257px;top:1397.0px;height:36px;line-height:36px;font-size:25.5px;color:#1e1e1e;"><i>高</i><i>级</i></div>
<svg style="left:2861px;top:1404px;" width="13" height="22" viewBox="0 0 13 22"><path d="M1.500 1.500l9.500 9.500-9.500 9.500" fill="none" stroke="#222" stroke-width="2"/></svg>
<div class="t" style="left:2257px;top:1459.0px;height:36px;line-height:36px;font-size:25.5px;color:#1e1e1e;"><i>样</i><i>式</i></div>
<svg style="left:2861px;top:1466px;" width="13" height="22" viewBox="0 0 13 22"><path d="M1.500 1.500l9.500 9.500-9.500 9.500" fill="none" stroke="#222" stroke-width="2"/></svg>
<div style="left:670px;top:329px;width:1600px;height:895px;background:#fff;border-radius:4px;box-shadow:0 2px 6px rgba(0,0,0,.12)"></div>
<div class="t" style="left:711px;top:370.5px;height:44px;line-height:44px;font-size:31.5px;color:#141414;"><i>节</i><i>点</i><i>配</i><i>置</i></div>
<svg style="left:2117px;top:370px;" width="30" height="29" viewBox="0 0 30 29"><path d="M1.500 9V1.500H9M21 1.500h7.500V9M28.500 20v7.500H21M9 27.500H1.500V20" fill="none" stroke="#111" stroke-width="2.800"/></svg>
<svg style="left:2204.5px;top:376.5px;" width="20" height="20" viewBox="0 0 20 20"><path d="M1 1L19 19M19 1L1 19" stroke="#8a8a8a" stroke-width="1.8" fill="none"/></svg>
<div style="left:710px;top:570px;width:1520px;height:4px;background:#e4e7ed"></div>
<div style="left:710px;top:570px;width:112px;height:4px;background:#4a8ef0"></div>
<div class="t" style="left:711px;top:515.0px;height:39px;line-height:39px;font-size:28px;color:#4a8ef0;"><i>基</i><i>础</i><i>配</i><i>置</i></div>
<div class="t" style="left:903px;top:515.0px;height:39px;line-height:39px;font-size:28px;color:#1f1f1f;"><i>菜</i><i>单</i><i>配</i><i>置</i></div>
<div style="left:682px;top:592px;width:1466px;height:178px;border:6px solid #e8432a;border-radius:13px"></div>
<div class="t" style="left:710.5px;top:612.0px;height:38px;line-height:38px;font-size:27px;color:#f0605d;">*</div>
<div class="t" style="left:731px;top:611.5px;height:39px;line-height:39px;font-size:28px;color:#575757;"><i>显</i><i>示</i><i>字</i><i>段</i></div>
<div class="t" style="left:1230.5px;top:612.0px;height:38px;line-height:38px;font-size:27px;color:#f0605d;">*</div>
<div class="t" style="left:1251px;top:611.5px;height:39px;line-height:39px;font-size:28px;color:#575757;"><i>和</i><i>父</i><i>节</i><i>点</i><i>关</i><i>联</i><i>字</i><i>段</i></div>
<div class="t" style="left:1750.5px;top:612.0px;height:38px;line-height:38px;font-size:27px;color:#f0605d;">*</div>
<div class="t" style="left:1771px;top:611.5px;height:39px;line-height:39px;font-size:28px;color:#575757;"><i>和</i><i>子</i><i>节</i><i>点</i><i>关</i><i>联</i><i>字</i><i>段</i></div>
<div style="left:710px;top:659px;width:354px;height:56px;border:2px solid #d6d9e0;border-radius:7px;background:#fff"></div>
<div class="t" style="left:732.5px;top:670.0px;height:34px;line-height:34px;font-size:24px;color:#2b2b2b;letter-spacing:0.500px">name</div>
<svg style="left:1019px;top:681px;" width="21" height="12" viewBox="0 0 21 12"><path d="M1 1l9.500 9.500L20 1" fill="none" stroke="#b4b4b8" stroke-width="1.800"/></svg>
<div style="left:1230px;top:659px;width:354px;height:56px;border:2px solid #d6d9e0;border-radius:7px;background:#fff"></div>
<div class="t" style="left:1252.5px;top:670.0px;height:34px;line-height:34px;font-size:24px;color:#2b2b2b;letter-spacing:0.500px">supId</div>
<svg style="left:1539px;top:681px;" width="21" height="12" viewBox="0 0 21 12"><path d="M1 1l9.500 9.500L20 1" fill="none" stroke="#b4b4b8" stroke-width="1.800"/></svg>
<div style="left:1750px;top:659px;width:354px;height:56px;border:2px solid #d6d9e0;border-radius:7px;background:#fff"></div>
<div class="t" style="left:1772.5px;top:670.0px;height:34px;line-height:34px;font-size:24px;color:#2b2b2b;letter-spacing:0.500px">id</div>
<svg style="left:2059px;top:681px;" width="21" height="12" viewBox="0 0 21 12"><path d="M1 1l9.500 9.500L20 1" fill="none" stroke="#b4b4b8" stroke-width="1.800"/></svg>
<div class="t" style="left:710.5px;top:762.5px;height:39px;line-height:39px;font-size:28px;color:#575757;"><i>图</i><i>标</i></div>
<div style="left:710px;top:807px;width:1520px;height:56px;border:2px solid #d6d9e0;border-radius:7px;background:#f5f6fa"></div>
<div style="left:832px;top:807px;width:1314px;height:56px;border:2px solid #b9bcc6;background:#fff"></div>
<svg style="left:754px;top:817px;" width="36" height="34" viewBox="0 0 36 34"><path d="M18 31C9 26 2.500 20 2.500 12.500 2.500 6 7 2.500 11 2.500c3 0 5.500 1.500 7 4 1.500-2.500 4-4 7-4 4 0 8.500 3.500 8.500 10C33.500 20 27 26 18 31z" fill="none" stroke="#8c8c8c" stroke-width="3.300" stroke-linejoin="round"/><path d="M12.500 18c1.500 2 3.500 3 5.500 3s4-1 5.500-3" fill="none" stroke="#8c8c8c" stroke-width="3.200" stroke-linecap="round"/></svg>
<div class="t" style="left:854px;top:818.0px;height:34px;line-height:34px;font-size:24px;color:#2b2b2b;letter-spacing:0.800px">fuwu</div>
<svg style="left:2176px;top:823px;" width="24" height="24" viewBox="0 0 24 24"><circle cx="10.500" cy="10.500" r="9" fill="none" stroke="#8f8f8f" stroke-width="1.800"/><path d="M17 17l5 5" stroke="#8f8f8f" stroke-width="1.800"/></svg>
<div class="t" style="left:710.5px;top:909.0px;height:39px;line-height:39px;font-size:28px;color:#575757;"><i>图</i><i>标</i><i>字</i><i>段</i></div>
<div style="left:710px;top:957px;width:1520px;height:56px;border:2px solid #d6d9e0;border-radius:7px;background:#fff"></div>
<div class="t" style="left:732.5px;top:968.0px;height:34px;line-height:34px;font-size:24px;color:#b0b0b0;"><i>请</i><i>选</i><i>择</i></div>
<div style="left:1964px;top:1128px;width:118px;height:56px;border:2px solid #d6d9e0;border-radius:6px;background:#fff"></div>
<div class="t" style="left:1996px;top:1139.0px;height:34px;line-height:34px;font-size:24px;color:#4a4a4a;"><i>取</i> <i>消</i></div>
<div style="left:2111px;top:1128px;width:119px;height:56px;border-radius:6px;background:#5b9cf8"></div>
<div class="t" style="left:2143px;top:1139.0px;height:34px;line-height:34px;font-size:24px;color:#fff;"><i>确</i> <i>定</i></div>
<div style="left:2842px;top:1270px;width:150px;height:92px;border-radius:46px;background:linear-gradient(90deg,#e6e9f2 0,#e6e9f2 54px,#f0f4ff 54px,#f0f4ff 100%);border-top:2px solid #dde7fc;border-bottom:2px solid #dde7fc;box-shadow:0 4px 8px rgba(110,110,200,.35)"></div>
<div style="left:2859.7px;top:1286px;width:61.4px;height:61.4px;border-radius:31px;background:conic-gradient(from 0deg,#7fa8ee 0,#58bdf0 14%,#4f9cf2 30%,#5470ee 48%,#6f66f0 62%,#9a80f2 82%,#a98cf0 92%,#7fa8ee 100%)"></div>
<div style="left:2863.4px;top:1289.7px;width:54px;height:54px;border-radius:27px;background:linear-gradient(180deg,#f2f3fd,#e8eafb)"></div>
<div class="t" style="left:2873.5px;top:1297.0px;height:43px;line-height:43px;font-size:30.5px;color:#5468e6;font-weight:bold;letter-spacing:-0.500px">Ai</div>
</body></html>
